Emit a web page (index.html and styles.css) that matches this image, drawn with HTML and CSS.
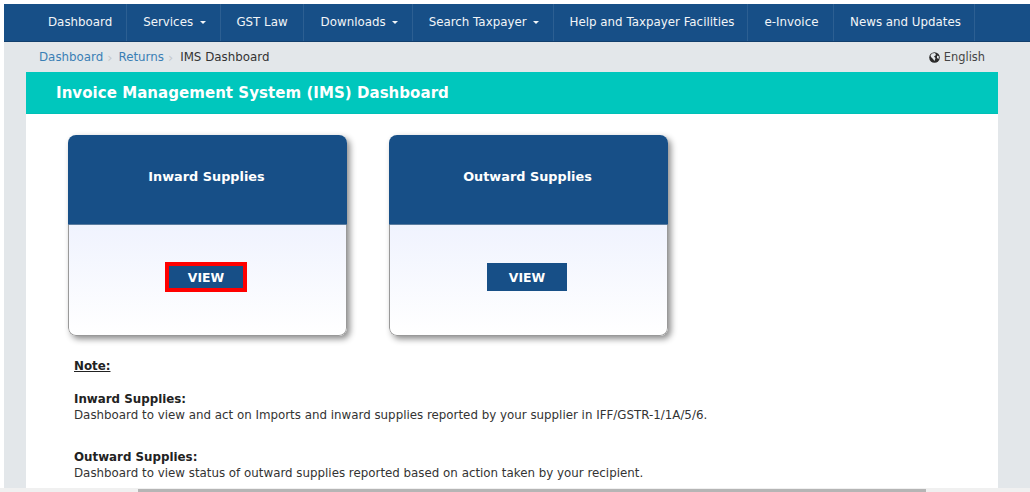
FILE: index.html
```html
<!DOCTYPE html>
<html lang="en">
<head>
<meta charset="utf-8">
<title>IMS Dashboard</title>
<link rel="stylesheet" href="styles.css">
</head>
<body>
<div class="page">
  <nav class="nav">
    <a class="nav-item w-dash">Dashboard</a>
    <a class="nav-item w-serv">Services <i class="caret"></i></a>
    <a class="nav-item w-law">GST Law</a>
    <a class="nav-item w-down">Downloads <i class="caret"></i></a>
    <a class="nav-item w-search">Search Taxpayer <i class="caret"></i></a>
    <a class="nav-item w-help">Help and Taxpayer Facilities</a>
    <a class="nav-item w-inv">e-Invoice</a>
    <a class="nav-item w-news">News and Updates</a>
  </nav>
  <div class="crumbs">
    <div class="trail">
      <a class="link">Dashboard</a><span class="sep">›</span>
      <a class="link">Returns</a><span class="sep">›</span>
      <span class="current">IMS Dashboard</span>
    </div>
    <div class="lang">
      <svg class="globe" width="11" height="11" viewBox="0 0 11 11"><circle cx="5.5" cy="5.5" r="5.3" fill="#2b2b2b"/><path d="M3 1.5 L6 1 L7 3 L5 4.5 L6.5 6 L5.5 9 L4 7 L2 5 L1.5 3.5Z M8 3.5 L10 4.5 L9.5 7 L8 6Z" fill="#e3e7ea"/></svg>
      English
    </div>
  </div>
  <main class="panel">
    <h1 class="title">Invoice Management System (IMS) Dashboard</h1>
    <div class="content">
      <div class="cards">
        <section class="card">
          <h2 class="card-head">Inward Supplies</h2>
          <div class="card-body"><button class="view outlined">VIEW</button></div>
        </section>
        <section class="card">
          <h2 class="card-head">Outward Supplies</h2>
          <div class="card-body"><button class="view">VIEW</button></div>
        </section>
      </div>
      <div class="notes">
        <p class="note-label">Note:</p>
        <p class="note"><b>Inward Supplies:</b><br>Dashboard to view and act on Imports and inward supplies reported by your supplier in IFF/GSTR-1/1A/5/6.</p>
        <p class="note"><b>Outward Supplies:</b><br>Dashboard to view status of outward supplies reported based on action taken by your recipient.</p>
      </div>
    </div>
  </main>
</div>
<div class="scrollbar"><div class="thumb"></div></div>
</body>
</html>
```

FILE: styles.css
```css
* { box-sizing: border-box; }
html, body { margin: 0; height: 492px; overflow: hidden; background: #fff; }
body { font-family: "DejaVu Sans", Verdana, sans-serif; font-size: 11.85px; color: #333; position: relative; }
.page { margin: 4px 0 0 4px; height: 488px; background: #e3e7ea; overflow: hidden; }
.nav { display: flex; height: 38px; background: #174f87; border-bottom: 1px solid #123f6d; }
.nav-item { display: flex; align-items: center; justify-content: center; color: #f2f5f8; border-right: 1px solid #2c5f92; white-space: pre; font-size: 11.85px; padding-bottom: 2px; }
.w-dash { width: 123px; justify-content: flex-start; padding-left: 44px; }
.w-serv { width: 94px; padding-left: 2px; }
.w-law { width: 83px; }
.w-down { width: 109px; padding-left: 3px; }
.w-search { width: 141px; padding-left: 2px; }
.w-help { width: 194px; padding-left: 3px; }
.w-inv { width: 86px; padding-left: 2px; }
.w-news { width: 141px; padding-left: 3px; }
.caret { display: inline-block; width: 0; height: 0; border-left: 3px solid transparent; border-right: 3px solid transparent; border-top: 3px solid #f2f5f8; margin-left: 3px; margin-top: 1px; }
.crumbs { display: flex; justify-content: space-between; align-items: center; height: 30px; padding: 0 45px 0 35px; }
.trail { display: flex; align-items: center; }
.link { color: #3a7fb5; }
.sep { color: #c4c8cc; margin: 0 6px 0 4px; font-size: 13px; }
.current { color: #333; margin-left: 1px; }
.lang { display: flex; align-items: center; gap: 4px; color: #444; font-size: 11.4px; }
.globe { display: block; }
.panel { margin: 0 32px 0 22px; background: #fff; height: 420px; }
.title { margin: 0; height: 42px; background: #00c7bd; border-bottom: 1px solid #00c0b6; color: #fff; font-size: 15px; letter-spacing: .05px; font-weight: bold; line-height: 42px; padding-left: 30px; }
.content { padding: 21px 0 0 42px; }
.cards { display: flex; gap: 42px; }
.card { width: 279px; height: 201px; border-radius: 8px; overflow: hidden; box-shadow: 3px 3px 6px rgba(0,0,0,.45); display: flex; flex-direction: column; }
.card-head { margin: 0; height: 90px; background: #174f87; color: #fff; font-size: 12.85px; font-weight: bold; text-align: center; line-height: 83px; padding-right: 2px; border-bottom: 1px solid #5b7c9f; }
.card-body { flex: 1; background: linear-gradient(#f0f3fe, #fff); display: flex; justify-content: center; padding: 38px 3px 0 0; border: 1px solid #999; border-top: 0; border-radius: 0 0 8px 8px; }
.view { width: 80px; height: 28px; background: #174f87; color: #fff; border: 0; font-family: "DejaVu Sans", sans-serif; font-weight: bold; font-size: 12.4px; padding: 0; }
.outlined { outline: 4px solid #f00; outline-offset: -3px; }
.notes { padding: 22px 0 0 6px; color: #333; line-height: 16px; }
.note-label { margin: 0 0 17px; font-weight: bold; text-decoration: underline; color: #222; }
.note { margin: 0 0 26px; }
.note b { color: #222; }
.scrollbar { position: absolute; left: 0; right: 0; bottom: 0; height: 4px; background: #f0f0f0; }
.thumb { position: absolute; left: 138px; width: 788px; top: 1px; height: 3px; background: #b5b5b5; }
```
